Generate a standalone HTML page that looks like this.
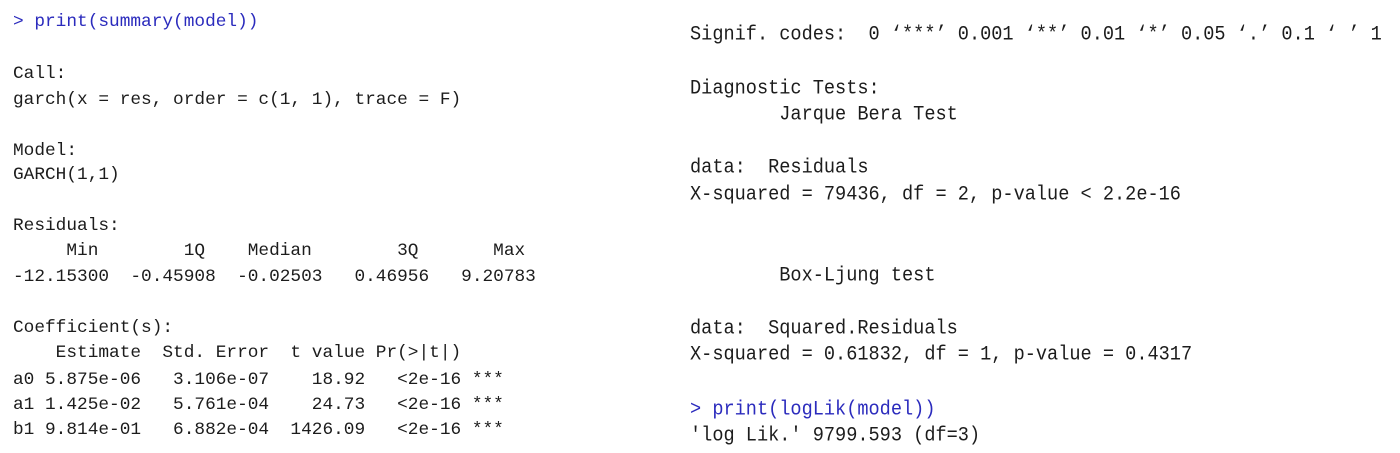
<!DOCTYPE html>
<html><head><meta charset="utf-8"><style>
html,body{margin:0;padding:0;background:#fff;width:1400px;height:453px;overflow:hidden;position:relative}
.l,.r{position:absolute;white-space:pre;font-family:"Liberation Mono","DejaVu Sans Mono",monospace;color:#1c1c1c;height:26px;line-height:26px}
.l{left:13px;font-size:17.8px}
.r{left:690px;font-size:18.6px;transform:scaleY(1.08);transform-origin:left center}
.b{color:#2b2bbd}
</style></head><body>
<div class="l b" style="top:9px">&gt; print(summary(model))</div>
<div class="l" style="top:61px">Call:</div>
<div class="l" style="top:87px">garch(x = res, order = c(1, 1), trace = F)</div>
<div class="l" style="top:138px">Model:</div>
<div class="l" style="top:162px">GARCH(1,1)</div>
<div class="l" style="top:213px">Residuals:</div>
<div class="l" style="top:238px">     Min        1Q    Median        3Q       Max</div>
<div class="l" style="top:264px">-12.15300  -0.45908  -0.02503   0.46956   9.20783</div>
<div class="l" style="top:315px">Coefficient(s):</div>
<div class="l" style="top:340px">    Estimate  Std. Error  t value Pr(&gt;|t|)    </div>
<div class="l" style="top:367px">a0 5.875e-06   3.106e-07    18.92   &lt;2e-16 ***</div>
<div class="l" style="top:392px">a1 1.425e-02   5.761e-04    24.73   &lt;2e-16 ***</div>
<div class="l" style="top:417px">b1 9.814e-01   6.882e-04  1426.09   &lt;2e-16 ***</div>

<div class="r" style="top:22px">Signif. codes:  0 ‘***’ 0.001 ‘**’ 0.01 ‘*’ 0.05 ‘.’ 0.1 ‘ ’ 1</div>
<div class="r" style="top:76px">Diagnostic Tests:</div>
<div class="r" style="top:102px">        Jarque Bera Test</div>
<div class="r" style="top:155px">data:  Residuals</div>
<div class="r" style="top:182px">X-squared = 79436, df = 2, p-value &lt; 2.2e-16</div>
<div class="r" style="top:263px">        Box-Ljung test</div>
<div class="r" style="top:316px">data:  Squared.Residuals</div>
<div class="r" style="top:342px">X-squared = 0.61832, df = 1, p-value = 0.4317</div>
<div class="r b" style="top:397px">&gt; print(logLik(model))</div>
<div class="r" style="top:423px">'log Lik.' 9799.593 (df=3)</div>
</body></html>
